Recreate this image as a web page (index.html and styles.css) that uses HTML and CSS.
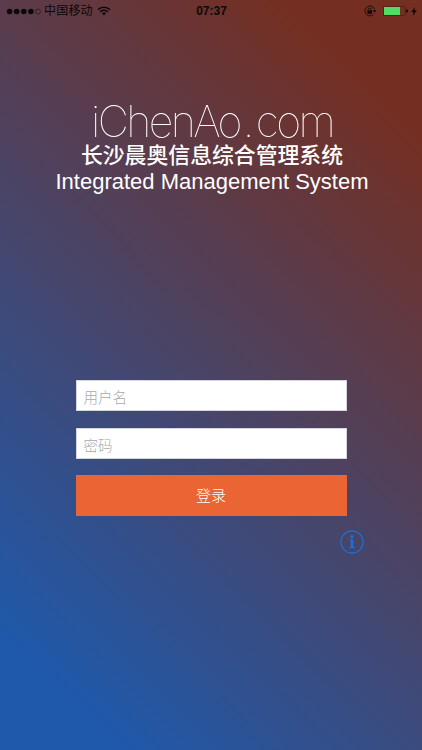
FILE: index.html
```html
<!DOCTYPE html>
<html lang="zh-CN">
<head>
<meta charset="utf-8">
<meta name="viewport" content="width=device-width, initial-scale=1">
<title>iChenAo.com</title>
<link rel="stylesheet" href="styles.css">
</head>
<body>
<div class="screen">
  <header class="status">
    <div class="status-left">
      <svg class="signal" width="35" height="7" viewBox="0 0 35 7">
        <g fill="#0c0808"><circle cx="3.6" cy="3.5" r="2.8"/><circle cx="10.7" cy="3.5" r="2.8"/><circle cx="17.8" cy="3.5" r="2.8"/><circle cx="24.9" cy="3.5" r="2.8"/></g>
        <circle cx="32" cy="3.5" r="2.5" fill="none" stroke="#0c0808" stroke-width=".5"/>
      </svg>
      <span class="carrier">中国移动</span>
      <svg class="wifi" width="14" height="10" viewBox="0 0 14 10" fill="none" stroke="#0c0808" stroke-width="1.6">
        <path d="M1 3.7a8.6 8.6 0 0 1 12 0M3.1 5.9a5.6 5.6 0 0 1 7.8 0"/>
        <path d="M4.9 7.3a3 3 0 0 1 4.2 0L7 9.5z" fill="#0c0808" stroke="none"/>
      </svg>
    </div>
    <time class="clock">07:37</time>
    <div class="status-right">
      <svg class="lock" width="13" height="12" viewBox="0 0 13 12">
        <path d="M10.6 4.1A5 5 0 1 0 9.4 9.5" fill="none" stroke="#0c0808" stroke-width=".8"/>
        <path d="M8.7 5.2h3.7l-1.8 2.4z" fill="#0c0808"/>
        <path d="M3.4 5.4h4.6v3.3H3.4z" fill="#0c0808"/>
        <path d="M4.3 5.5V4.4a1.4 1.4 0 0 1 2.8 0v1.1" fill="none" stroke="#0c0808" stroke-width=".8"/>
      </svg>
      <svg class="battery" width="25" height="10" viewBox="0 0 25 10">
        <rect x=".4" y=".4" width="22" height="9.2" rx="1" fill="none" stroke="#3a170f" stroke-width=".6"/>
        <rect x="1" y="1" width="16" height="8" fill="#50db65"/>
        <path d="M23.2 3.2a1.8 1.8 0 0 1 0 3.6z" fill="#0c0808"/>
      </svg>
      <svg class="bolt" width="6" height="9" viewBox="0 0 6 9"><path d="M4 0 .3 5h2.1L1.7 9 5.8 3.6H3.5z" fill="#0c0808"/></svg>
    </div>
  </header>
  <main class="content">
    <div class="brand">
      <h1 class="logo">iChenAo<span class="dot">.</span>com</h1>
      <p class="name-zh">长沙晨奥信息综合管理系统</p>
      <p class="name-en">Integrated Management System</p>
    </div>
    <form class="login">
      <input class="field" type="text" placeholder="用户名">
      <input class="field" type="password" placeholder="密码">
      <button class="submit" type="button">登录</button>
    </form>
    <svg class="info" width="24" height="24" viewBox="0 0 24 24">
      <circle cx="12" cy="12" r="11.1" fill="none" stroke="#1a70dc" stroke-width="1.1"/>
      <path d="M10.5 5.2h2.9v2.7h-2.9zM9.6 9.4h3.8v7.7h1.2v1.1H9.5v-1.1h1.2v-6.6H9.6z" fill="#1a70dc"/>
    </svg>
  </main>
</div>
</body>
</html>
```
FILE: styles.css
```css
* { box-sizing: border-box; }
body {
  margin: 0;
  font-family: "Liberation Sans", "Noto Sans CJK SC", sans-serif;
}
.screen {
  width: 422px;
  height: 750px;
  overflow: hidden;
  background: linear-gradient(44deg, #1f59ab 10%, #742f22 88%);
}
.status {
  display: grid;
  grid-template-columns: 1fr auto 1fr;
  align-items: center;
  height: 22px;
  padding: 0 5px 0 6px;
  color: #0c0808;
}
.status-left, .status-right { display: flex; align-items: center; }
.status-right { justify-content: flex-end; }
.carrier {
  margin: 0 4px 0 3px;
  font-size: 12px;
  line-height: 22px;
  letter-spacing: .2px;
}
.clock {
  font-size: 12px;
  font-weight: bold;
  line-height: 22px;
}
.battery { margin: 0 3px 0 6px; }
.content {
  display: flex;
  flex-direction: column;
  align-items: center;
}
.brand {
  display: flex;
  flex-direction: column;
  align-items: center;
  height: 358px;
  padding: 76px 0 0 2px;
  color: #fff;
  white-space: nowrap;
}
.logo {
  margin: 0 0 -5px;
  font: 100 43px/47px Inter, Roboto, sans-serif;
  letter-spacing: -2.6px;
  will-change: transform;
}
.dot { margin: 0 4px 0 3px; }
.name-zh {
  margin: 0;
  font: 500 21.85px/28px "Noto Sans CJK SC", sans-serif;
}
.name-en {
  margin: 0;
  padding-top: 1px;
  font-size: 22px;
  line-height: 26px;
}
.login {
  display: flex;
  flex-direction: column;
  width: 271px;
}
.field {
  height: 31px;
  margin: 0 0 17px;
  padding: 2px 7px 0;
  border: 1px solid #d5d5e0;
  border-radius: 0;
  background: #fff;
  font: 300 14.5px "Noto Sans CJK SC", sans-serif;
}
.field + .field { margin-bottom: 16px; }
.field::placeholder { color: #a9a9a9; opacity: 1; }
.submit {
  height: 41px;
  padding: 0 0 2px;
  border: 0;
  background: #eb6534;
  color: #fff;
  font: 300 15px "Noto Sans CJK SC", sans-serif;
}
.info { margin: 14px 0 0 282px; }
```
